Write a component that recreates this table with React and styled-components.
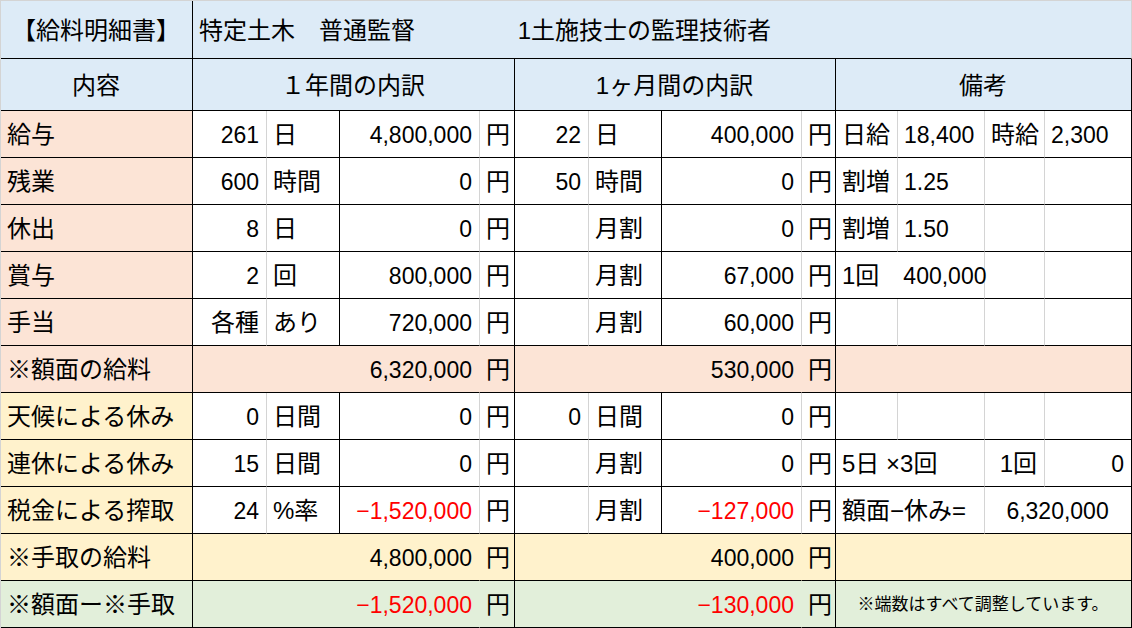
import React from 'react';
import styled, { createGlobalStyle } from 'styled-components';

const BLUE = '#ddebf7';
const PEACH = '#fce4d6';
const YELLOW = '#fff2cc';
const GREEN = '#e2efda';
const GRID = '#d4d4d4';

const GlobalStyle = createGlobalStyle`
    body {
        margin: 0;
        background: #fff;
        font-family: "Liberation Sans", "Noto Sans CJK JP", sans-serif;
    }
`;

const Sheet = styled.table`
    width: 1132px;
    table-layout: fixed;
    border-collapse: separate;
    border-spacing: 0;
    border-top: 1px solid ${GRID};
    border-left: 1px solid ${GRID};
`;

const Row = styled.tr`
    height: ${(props) => props.$h || 47}px;
`;

const edgeColor = (edge) => {
    if (edge === 'gray') return GRID;
    if (edge === 'fill') return 'transparent';
    return '#000';
};

const Cell = styled.td`
    box-sizing: border-box;
    padding: 3px 7px 0 6px;
    border-right: 1px solid ${(props) => edgeColor(props.$edge)};
    border-bottom: 1px solid #000;
    background: ${(props) => props.$bg || '#fff'};
    color: ${(props) => (props.$red ? '#ff0000' : '#000')};
    text-align: ${(props) => props.$align || 'left'};
    font-family: "Liberation Sans", "Noto Sans CJK JP", sans-serif;
    font-size: ${(props) => (props.$small ? 17 : props.$num ? 23 : 24)}px;
    line-height: 1.2;
    vertical-align: middle;
    white-space: pre;
    overflow: visible;
`;

const Num = styled.span`
    font-size: 23px;
`;

const widths = [192, 74, 73, 140, 35, 74, 73, 140, 34, 62, 87, 60, 87];

const TONES = { peach: PEACH, yellow: YELLOW, green: GREEN };

// one period block: count | unit | amount | 円
function Period({ data }) {
    const [count, unit, amount] = data;
    const numeric = /^\d/.test(count);
    return (
        <>
            <Cell $num={numeric} $align="right" $edge="gray">{count}</Cell>
            <Cell>{unit}</Cell>
            <Cell $num $align="right" $edge="gray" $red={amount.startsWith('−')}>{amount}</Cell>
            <Cell>円</Cell>
        </>
    );
}

function Total({ value, bg }) {
    return (
        <>
            <Cell colSpan={3} $num $align="right" $edge="fill" $bg={bg} $red={value.startsWith('−')}>{value}</Cell>
            <Cell $bg={bg}>円</Cell>
        </>
    );
}

const EmptyNotes = () => (
    <>
        <Cell $edge="gray" />
        <Cell $edge="gray" />
        <Cell $edge="gray" />
        <Cell />
    </>
);

const detailRows = [
    {
        label: '給与', tone: 'peach', year: ['261', '日', '4,800,000'], month: ['22', '日', '400,000'],
        notes: (
            <>
                <Cell $edge="gray">日給</Cell>
                <Cell $num $edge="gray">18,400</Cell>
                <Cell $edge="gray">時給</Cell>
                <Cell $num>2,300</Cell>
            </>
        ),
    },
    {
        label: '残業', tone: 'peach', year: ['600', '時間', '0'], month: ['50', '時間', '0'],
        notes: (
            <>
                <Cell $edge="gray">割増</Cell>
                <Cell $num $edge="gray">1.25</Cell>
                <Cell $edge="gray" />
                <Cell />
            </>
        ),
    },
    {
        label: '休出', tone: 'peach', year: ['8', '日', '0'], month: ['', '月割', '0'],
        notes: (
            <>
                <Cell $edge="gray">割増</Cell>
                <Cell $num $edge="gray">1.50</Cell>
                <Cell $edge="gray" />
                <Cell />
            </>
        ),
    },
    {
        label: '賞与', tone: 'peach', year: ['2', '回', '800,000'], month: ['', '月割', '67,000'],
        notes: (
            <>
                <Cell colSpan={2} $edge="gray">1回　<Num>400,000</Num></Cell>
                <Cell $edge="gray" />
                <Cell />
            </>
        ),
    },
    {
        label: '手当', tone: 'peach', year: ['各種', 'あり', '720,000'], month: ['', '月割', '60,000'],
        notes: <EmptyNotes />,
    },
];

const restRows = [
    {
        label: '天候による休み', tone: 'yellow', year: ['0', '日間', '0'], month: ['0', '日間', '0'],
        notes: <EmptyNotes />,
    },
    {
        label: '連休による休み', tone: 'yellow', year: ['15', '日間', '0'], month: ['', '月割', '0'],
        notes: (
            <>
                <Cell colSpan={2} $edge="gray">5日 ×3回</Cell>
                <Cell $edge="gray" $align="right">1回</Cell>
                <Cell $num $align="right">0</Cell>
            </>
        ),
    },
    {
        label: '税金による搾取', tone: 'yellow', year: ['24', '%率', '−1,520,000'], month: ['', '月割', '−127,000'],
        notes: (
            <>
                <Cell colSpan={2} $edge="gray">額面−休み=</Cell>
                <Cell colSpan={2} $num $align="center">6,320,000</Cell>
            </>
        ),
    },
];

function DetailRow({ row }) {
    return (
        <Row>
            <Cell $bg={TONES[row.tone]}>{row.label}</Cell>
            <Period data={row.year} />
            <Period data={row.month} />
            {row.notes}
        </Row>
    );
}

export default function App() {
    return (
        <>
            <GlobalStyle />
            <Sheet>
                <colgroup>
                    {widths.map((w, i) => <col key={i} style={{ width: w }} />)}
                </colgroup>
                <tbody>
                    <Row $h={58}>
                        <Cell $bg={BLUE} $align="center">【給料明細書】</Cell>
                        <Cell colSpan={12} $bg={BLUE} $edge="gray">特定土木　普通監督　　　　 1土施技士の監理技術者</Cell>
                    </Row>
                    <Row $h={52}>
                        <Cell $bg={BLUE} $align="center">内容</Cell>
                        <Cell colSpan={4} $bg={BLUE} $align="center">１年間の内訳</Cell>
                        <Cell colSpan={4} $bg={BLUE} $align="center">1ヶ月間の内訳</Cell>
                        <Cell colSpan={4} $bg={BLUE} $align="center">備考</Cell>
                    </Row>
                    {detailRows.map((row) => <DetailRow key={row.label} row={row} />)}
                    <Row>
                        <Cell $bg={PEACH}>※額面の給料</Cell>
                        <Total value="6,320,000" bg={PEACH} />
                        <Total value="530,000" bg={PEACH} />
                        <Cell colSpan={4} $bg={PEACH} />
                    </Row>
                    {restRows.map((row) => <DetailRow key={row.label} row={row} />)}
                    <Row>
                        <Cell $bg={YELLOW}>※手取の給料</Cell>
                        <Total value="4,800,000" bg={YELLOW} />
                        <Total value="400,000" bg={YELLOW} />
                        <Cell colSpan={4} $bg={YELLOW} />
                    </Row>
                    <Row>
                        <Cell $bg={GREEN}>※額面ー※手取</Cell>
                        <Total value="−1,520,000" bg={GREEN} />
                        <Total value="−130,000" bg={GREEN} />
                        <Cell colSpan={4} $bg={GREEN} $align="center" $small>※端数はすべて調整しています。</Cell>
                    </Row>
                </tbody>
            </Sheet>
        </>
    );
}
